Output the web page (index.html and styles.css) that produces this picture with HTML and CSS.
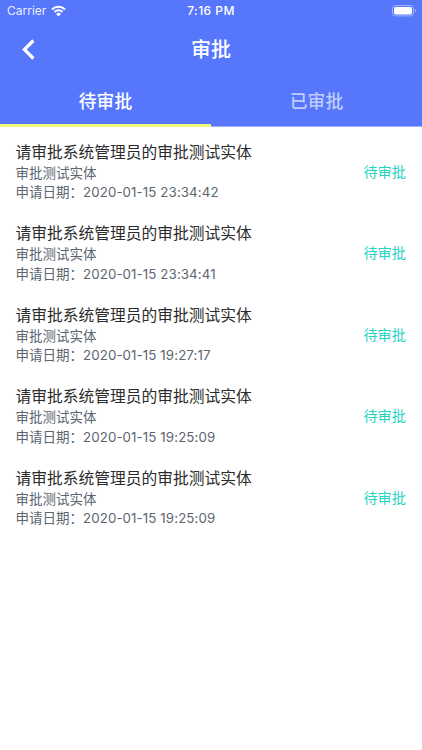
FILE: index.html
```
<!DOCTYPE html>
<html lang="zh-CN">
<head>
    <meta charset="UTF-8">
    <meta name="viewport" content="width=device-width, initial-scale=1.0">
    <title>审批</title>
    <link rel="stylesheet" href="styles.css">
</head>
<body>
    <header class="header">
        <div class="status-bar">
            <div class="carrier">
                <span>Carrier</span>
                <svg class="wifi" viewBox="0 0 16 12" width="15" height="12">
                    <path d="M1.1 4.3a9.8 9.8 0 0 1 13.8 0" fill="none" stroke="#fff" stroke-width="2.3"/>
                    <path d="M3.7 7a6.1 6.1 0 0 1 8.6 0" fill="none" stroke="#fff" stroke-width="2.1"/>
                    <path d="M8 11.8L5.4 9.2a3.7 3.7 0 0 1 5.2 0z" fill="#fff"/>
                </svg>
            </div>
            <span class="time">7:16 PM</span>
            <div class="battery">
                <svg viewBox="0 0 25 12" width="25" height="12">
                    <rect x="0.5" y="0.5" width="21" height="10.4" rx="3" fill="none" stroke="#fff" stroke-opacity="0.45"/>
                    <rect x="2" y="2" width="18" height="7.4" rx="1.6" fill="#fff"/>
                    <path d="M23 4v3.6c1.5-.5 1.5-3.1 0-3.6z" fill="#fff" fill-opacity="0.5"/>
                </svg>
            </div>
        </div>
        <div class="nav-bar">
            <svg class="back" viewBox="0 0 13 21" width="13" height="21">
                <path d="M11.4 1.5L2.4 10.5l9 9" fill="none" stroke="#fff" stroke-width="3.2"/>
            </svg>
            <h1 class="title">审批</h1>
        </div>
        <nav class="tabs">
            <div class="tab active">待审批</div>
            <div class="tab">已审批</div>
        </nav>
    </header>

    <main class="list">
        <div class="item">
            <div class="info">
                <p class="name">请审批系统管理员的审批测试实体</p>
                <p class="desc">审批测试实体</p>
                <p class="desc">申请日期：<span class="date">2020-01-15 23:34:42</span></p>
            </div>
            <span class="state">待审批</span>
        </div>
        <div class="item">
            <div class="info">
                <p class="name">请审批系统管理员的审批测试实体</p>
                <p class="desc">审批测试实体</p>
                <p class="desc">申请日期：<span class="date">2020-01-15 23:34:41</span></p>
            </div>
            <span class="state">待审批</span>
        </div>
        <div class="item">
            <div class="info">
                <p class="name">请审批系统管理员的审批测试实体</p>
                <p class="desc">审批测试实体</p>
                <p class="desc">申请日期：<span class="date">2020-01-15 19:27:17</span></p>
            </div>
            <span class="state">待审批</span>
        </div>
        <div class="item">
            <div class="info">
                <p class="name">请审批系统管理员的审批测试实体</p>
                <p class="desc">审批测试实体</p>
                <p class="desc">申请日期：<span class="date">2020-01-15 19:25:09</span></p>
            </div>
            <span class="state">待审批</span>
        </div>
        <div class="item">
            <div class="info">
                <p class="name">请审批系统管理员的审批测试实体</p>
                <p class="desc">审批测试实体</p>
                <p class="desc">申请日期：<span class="date">2020-01-15 19:25:09</span></p>
            </div>
            <span class="state">待审批</span>
        </div>
    </main>
</body>
</html>
```
FILE: styles.css
```
* { box-sizing: border-box; margin: 0; padding: 0; }
body {
    min-height: 100vh; background: #fff; color: #2b2b2b;
    font-family: Inter, "Noto Sans CJK SC", sans-serif;
}

/* Header */
.header { background: #5677fc; color: #fff; }
.status-bar {
    display: grid; grid-template-columns: 1fr auto 1fr; align-items: center;
    height: 22px; padding: 0 5px 0 7px; font-size: 12px; line-height: 22px;
}
.carrier { display: flex; align-items: center; gap: 5px; color: rgba(255, 255, 255, 0.9); }
.time { margin-right: 2px; font-weight: 500; letter-spacing: 0.45px; }
.battery { display: flex; justify-content: flex-end; }
.nav-bar {
    display: grid; grid-template-columns: 1fr auto 1fr; align-items: center;
    height: 55px; padding: 0 22px;
}
.title { font-size: 20px; font-weight: 500; line-height: 28px; }
.tabs { display: flex; height: 50px; border-bottom: 1px solid #9aaefd; }
.tab {
    flex: 1; height: 50px; line-height: 50px; text-align: center;
    font-size: 17.8px; color: rgba(255, 255, 255, 0.65); font-weight: 500;
}
.tab.active { color: #fff; border-bottom: 3px solid #f3f776; }

/* Approval list */
.list { padding-top: 4px; }
.item {
    display: flex; justify-content: space-between; align-items: center;
    height: 81.5px; padding: 0 16px 0 15.5px;
}
.name { font-size: 15.75px; line-height: 23px; }
.desc { font-size: 13.5px; line-height: 19.3px; color: #5c6670; }
.date { font-size: 13.3px; letter-spacing: 0.1px; }
.state { font-size: 14.2px; line-height: 20px; color: #27d3c3; }
```
